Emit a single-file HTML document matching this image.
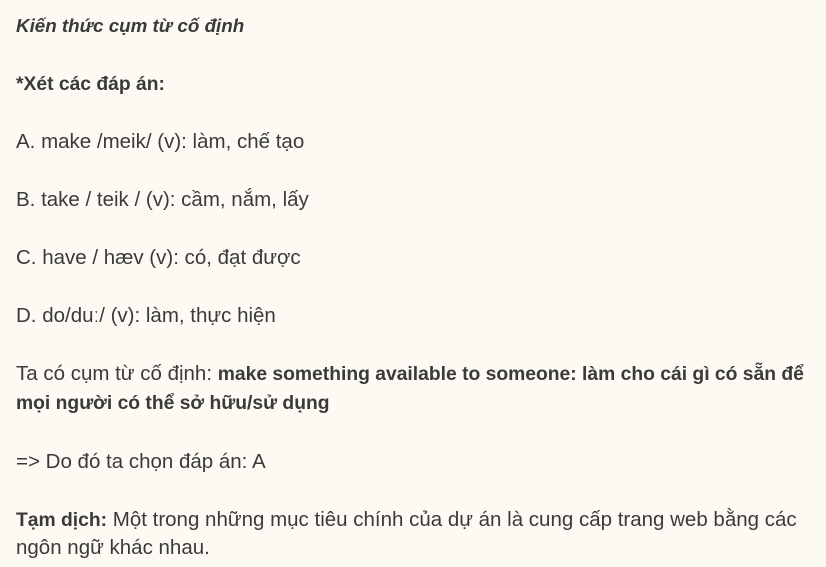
<!DOCTYPE html>
<html><head><meta charset="utf-8"><style>
html,body{margin:0;padding:0;background:#fdfaf3;}
body{width:826px;height:567px;overflow:hidden;font-family:"Liberation Sans",sans-serif;font-size:20.5px;color:#3a3a3a;line-height:29px;position:relative;}
p{position:absolute;left:16px;margin:0;white-space:nowrap;}
b{font-weight:bold;font-size:19.3px;line-height:29px;}
i{font-size:18.8px;}
</style></head><body>
<p style="top:11px"><b><i>Kiến thức cụm từ cố định</i></b></p>
<p style="top:69px"><b>*Xét các đáp án:</b></p>
<p style="top:127px">A. make /meik/ (v): làm, chế tạo</p>
<p style="top:185px">B. take / teik / (v): cầm, nắm, lấy</p>
<p style="top:243px">C. have / hæv (v): có, đạt được</p>
<p style="top:301px">D. do/duː/ (v): làm, thực hiện</p>
<p style="top:359px">Ta có cụm từ cố định: <b>make something available to someone: làm cho cái gì có sẵn để</b></p>
<p style="top:388px"><b>mọi người có thể sở hữu/sử dụng</b></p>
<p style="top:447px">=&gt; Do đó ta chọn đáp án: A</p>
<p style="top:505px"><b>Tạm dịch:</b> Một trong những mục tiêu chính của dự án là cung cấp trang web bằng các</p>
<p style="top:533px">ngôn ngữ khác nhau.</p>
</body></html>
